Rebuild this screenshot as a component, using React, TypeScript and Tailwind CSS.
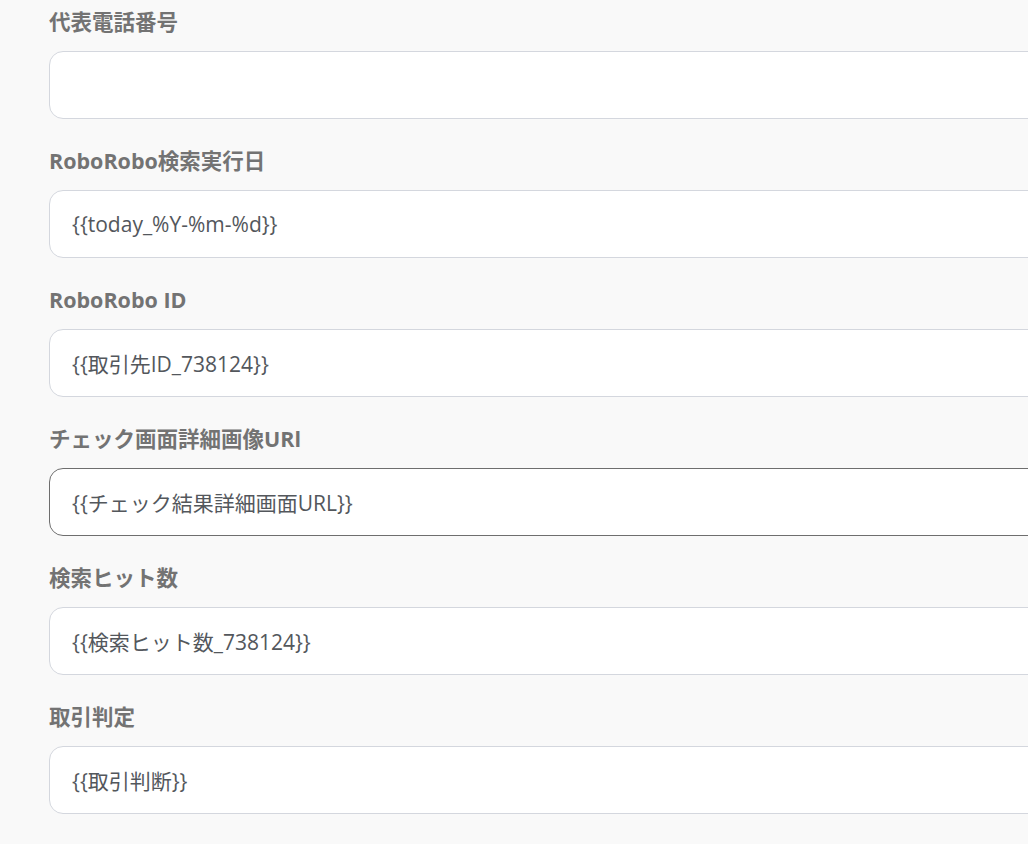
const fields: { label: string; value: string; focused?: boolean }[] = [
  { label: "代表電話番号", value: "" },
  { label: "RoboRobo検索実行日", value: "{{today_%Y-%m-%d}}" },
  { label: "RoboRobo ID", value: "{{取引先ID_738124}}" },
  { label: "チェック画面詳細画像URl", value: "{{チェック結果詳細画面URL}}", focused: true },
  { label: "検索ヒット数", value: "{{検索ヒット数_738124}}" },
  { label: "取引判定", value: "{{取引判断}}" },
];

export default function App() {
  return (
    <div
      className="min-h-[844px] w-[1028px] overflow-hidden bg-[#f9f9f9] pl-[49px] pt-[7px]"
      style={{ fontFamily: '"Open Sans", "Noto Sans CJK JP", sans-serif' }}
    >
      <div className="flex w-[1010px] flex-col gap-[27px]">
        {fields.map((f) => (
          <div key={f.label} className="flex flex-col gap-[14px]">
            <label className="h-[30px] text-[21.5px] font-bold leading-[30px] text-[#737373]">
              {f.label}
            </label>
            <input
              readOnly
              value={f.value}
              className={`h-[68px] w-full rounded-[14px] border bg-white px-[22px] text-[21px] text-[#53575c] outline-none ${
                f.focused ? "border-[#6e6e6e]" : "border-[#d4d7de]"
              }`}
              style={{ fontFamily: '"Open Sans", "Noto Sans CJK JP", sans-serif' }}
            />
          </div>
        ))}
      </div>
    </div>
  );
}
